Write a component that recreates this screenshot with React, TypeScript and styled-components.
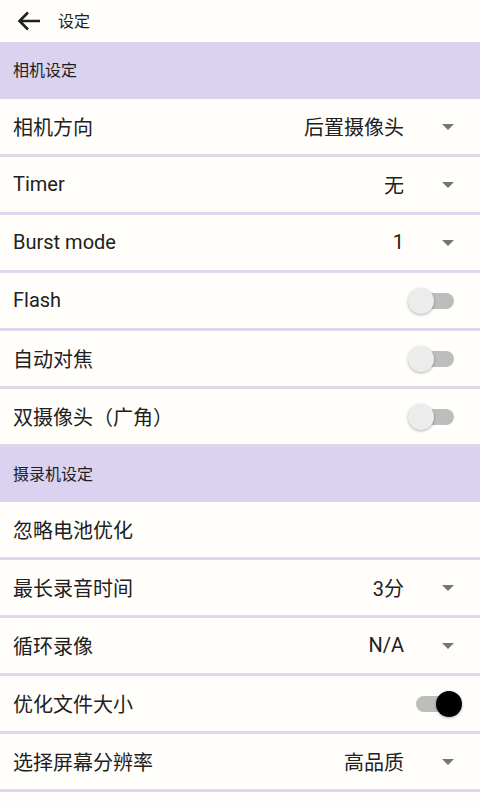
import * as React from 'react'
import styled, { createGlobalStyle } from 'styled-components'

const GlobalStyle = createGlobalStyle`
  html, body {
    margin: 0;
    padding: 0;
    background: #fffefb;
    font-family: Roboto, 'Noto Sans CJK SC', sans-serif;
    color: #212121;
  }
`

const Page = styled.div`
  width: 480px;
  min-height: 804px;
  background: #fffefb;
`

const Toolbar = styled.div`
  height: 42px;
  display: flex;
  align-items: center;
  padding-left: 16px;
`

const BackButton = styled.div`
  width: 26px;
  height: 22px;
  display: flex;
  margin-right: 16px;
`

const Title = styled.div`
  font-size: 16px;
  margin-bottom: 2px;
`

const SectionHeader = styled.div<{ $h: number }>`
  height: ${({ $h }) => $h}px;
  box-sizing: border-box;
  background: #dad2ee;
  display: flex;
  align-items: center;
  padding: 0 0 4px 13px;
  font-size: 16px;
`

const Row = styled.div`
  height: 55px;
  border-bottom: 3px solid #dcd7eb;
  display: flex;
  align-items: center;
  padding: 0 26px 0 13px;
  background: #fffefb;
`

const Label = styled.div`
  flex: 1;
  font-size: 20px;
  margin-bottom: 1px;
`

const Value = styled.div`
  font-size: 20px;
  margin: 0 38px 1px 0;
`

const Caret = styled.div`
  width: 0;
  height: 0;
  border-left: 6px solid transparent;
  border-right: 6px solid transparent;
  border-top: 6px solid #757575;
`

const Track = styled.div`
  position: relative;
  width: 38px;
  height: 16px;
  border-radius: 8px;
  background: #bdbdbd;
`

const Thumb = styled.div<{ $on?: boolean }>`
  position: absolute;
  top: -5px;
  left: ${({ $on }) => ($on ? '20px' : '-8px')};
  width: 26px;
  height: 26px;
  border-radius: 50%;
  background: ${({ $on }) => ($on ? '#000' : '#ececec')};
  box-shadow: 0 1px 3px rgba(0, 0, 0, 0.3);
`

type Item =
  | { kind: 'select'; label: string; value: string }
  | { kind: 'switch'; label: string; on: boolean }
  | { kind: 'plain'; label: string }

const camera: Item[] = [
  { kind: 'select', label: '相机方向', value: '后置摄像头' },
  { kind: 'select', label: 'Timer', value: '无' },
  { kind: 'select', label: 'Burst mode', value: '1' },
  { kind: 'switch', label: 'Flash', on: false },
  { kind: 'switch', label: '自动对焦', on: false },
  { kind: 'switch', label: '双摄像头（广角）', on: false },
]

const recorder: Item[] = [
  { kind: 'plain', label: '忽略电池优化' },
  { kind: 'select', label: '最长录音时间', value: '3分' },
  { kind: 'select', label: '循环录像', value: 'N/A' },
  { kind: 'switch', label: '优化文件大小', on: true },
  { kind: 'select', label: '选择屏幕分辨率', value: '高品质' },
]

const SettingRow = ({ item }: { item: Item }) => (
  <Row>
    <Label>{item.label}</Label>
    {item.kind === 'select' && (
      <>
        <Value>{item.value}</Value>
        <Caret />
      </>
    )}
    {item.kind === 'switch' && (
      <Track>
        <Thumb $on={item.on} />
      </Track>
    )}
  </Row>
)

const App = () => (
  <Page>
    <GlobalStyle />
    <Toolbar>
      <BackButton>
        <svg width="26" height="22" viewBox="0 0 26 22">
          <path
            d="M24 11H3.5M12 2.5L3.5 11L12 19.5"
            fill="none"
            stroke="#212121"
            strokeWidth="2.6"
            strokeLinejoin="miter"
          />
        </svg>
      </BackButton>
      <Title>设定</Title>
    </Toolbar>
    <SectionHeader $h={57}>相机设定</SectionHeader>
    {camera.map((item, i) => (
      <SettingRow key={i} item={item} />
    ))}
    <SectionHeader $h={55}>摄录机设定</SectionHeader>
    {recorder.map((item, i) => (
      <SettingRow key={i} item={item} />
    ))}
  </Page>
)

export default App
